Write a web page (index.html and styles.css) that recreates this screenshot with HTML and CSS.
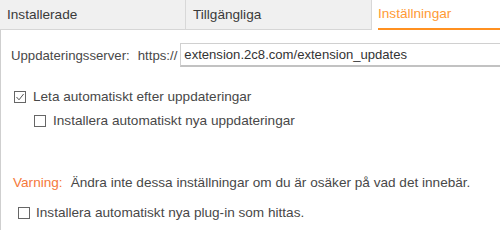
FILE: index.html
```html
<!DOCTYPE html>
<html lang="sv">
<head>
<meta charset="utf-8">
<title>Inställningar</title>
<link rel="stylesheet" href="styles.css">
</head>
<body>
<div class="tabs">
  <div class="tab">Installerade</div>
  <div class="tab">Tillgängliga</div>
  <div class="tab tab-active"><span class="tab-label">Inställningar</span></div>
</div>
<div class="panel">
  <div class="server-row">
    <span class="server-label">Uppdateringsserver:</span>
    <span class="proto">https://</span>
    <input class="server-input" type="text" value="extension.2c8.com/extension_updates">
  </div>
  <label class="check-row row-1">
    <span class="box checked"><svg viewBox="0 0 12 12" width="12" height="12"><path d="M2.5 6 L5 8.8 L9.6 3" fill="none" stroke="#555" stroke-width="1"/></svg></span>
    <span>Leta automatiskt efter uppdateringar</span>
  </label>
  <label class="check-row row-2">
    <span class="box"></span>
    <span>Installera automatiskt nya uppdateringar</span>
  </label>
  <div class="warning-row">
    <span class="warn">Varning:</span>
    <span>Ändra inte dessa inställningar om du är osäker på vad det innebär.</span>
  </div>
  <label class="check-row row-3">
    <span class="box"></span>
    <span>Installera automatiskt nya plug-in som hittas.</span>
  </label>
</div>
</body>
</html>
```
FILE: styles.css
```css
html, body {
  margin: 0;
  padding: 0;
}
body {
  width: 500px;
  height: 230px;
  overflow: hidden;
  background: #ffffff;
  font-family: "Liberation Sans", Arial, sans-serif;
  font-size: 13.6px;
  color: #484848;
}
.tabs {
  display: flex;
  height: 30px;
}
.tab {
  box-sizing: border-box;
  width: 186px;
  height: 30px;
  padding-left: 7px;
  line-height: 29px;
  background: #f0f0f0;
  border-right: 1px solid #d8d8d8;
  border-bottom: 1px solid #d6d6d6;
  color: #3a3a3a;
}
.tab-active {
  flex: 1;
  width: auto;
  background: #ffffff;
  border: none;
  padding-left: 6px;
  display: flex;
}
.tab-label {
  flex: 1;
  box-sizing: border-box;
  height: 30px;
  line-height: 28px;
  border-bottom: 2px solid #ff9020;
  color: #ff9a35;
}
.panel {
  box-sizing: border-box;
  height: 200px;
  border-left: 1px solid #cfcfcf;
  display: flex;
  flex-direction: column;
}
.server-row {
  display: flex;
  align-items: center;
  margin-top: 13px;
  padding-left: 10px;
  height: 24px;
}
.server-label {
  font-size: 13.2px;
}
.proto {
  margin-left: 8px;
  font-size: 13.2px;
}
.server-input {
  flex: 1;
  min-width: 0;
  box-sizing: border-box;
  height: 24px;
  margin: 0 -4px 0 3px;
  padding: 0 3px;
  border: 1px solid #d0d0d0;
  border-bottom: 2px solid #c2c2c2;
  font-family: "Liberation Sans", Arial, sans-serif;
  font-size: 13.1px;
  color: #333333;
  outline: none;
  background: #ffffff;
}
.check-row {
  display: flex;
  align-items: center;
  height: 16px;
  line-height: 16px;
  gap: 7px;
}
.row-1 {
  margin-top: 22px;
  padding-left: 13px;
}
.row-2 {
  margin-top: 8px;
  padding-left: 33px;
}
.row-3 {
  margin-top: 14px;
  padding-left: 17px;
  gap: 6px;
}
.box {
  box-sizing: border-box;
  width: 12px;
  height: 12px;
  border: 1px solid #666666;
  background: #ffffff;
  position: relative;
  flex: none;
}
.box svg {
  position: absolute;
  left: -1px;
  top: -1px;
}
.warning-row {
  display: flex;
  height: 16px;
  line-height: 16px;
  margin-top: 46px;
  padding-left: 12px;
  gap: 8px;
}
.warn {
  color: #f5793b;
}
```
